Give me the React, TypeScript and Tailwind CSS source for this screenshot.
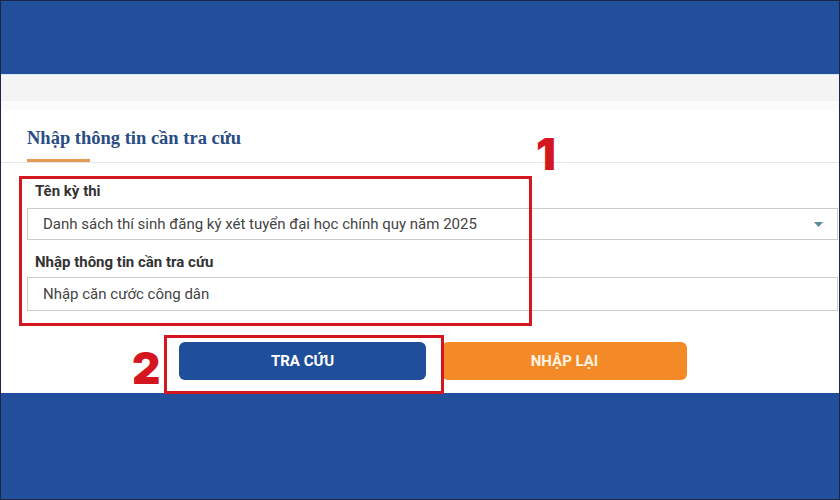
const RED = "border-[#d4161e]";

const App = () => {
  return (
    <div
      className="relative w-[840px] h-[500px] overflow-hidden flex flex-col bg-white border border-[#1c2746]"
      style={{ fontFamily: "Roboto, 'Liberation Sans', sans-serif" }}
    >
      {/* Top header band */}
      <div className="h-[73px] shrink-0 bg-[#224f9c]" />
      <div className="h-px shrink-0 bg-[#d6e6f2]" />
      <div className="h-[26px] shrink-0 bg-[#f4f4f4]" />
      <div className="h-[10px] shrink-0 bg-[#fbfbfb]" />

      {/* Section title */}
      <div className="shrink-0 pl-[26px] pt-[14px]">
        <h2
          className="text-[18.5px] leading-[26px] font-bold text-[#2a4c84]"
          style={{ fontFamily: "'Liberation Serif', serif" }}
        >
          Nhập thông tin cần tra cứu
        </h2>
        <div className="mt-[8px] h-[3px] w-[63px] bg-[#e39a52]" />
      </div>
      <div className="h-px shrink-0 bg-[#e6e6e6]" />

      {/* Form */}
      <div className="flex-1 flex flex-col pl-[26px] pr-px">
        <label className="mt-[18px] pl-[8px] text-[15px] leading-[20px] font-bold text-[#333]">Tên kỳ thi</label>
        <div className="mt-[7px] h-[32px] flex items-center justify-between border border-[#cccccc] pl-[15px] pr-[14px] text-[15px] text-[#444]">
          <span>Danh sách thí sinh đăng ký xét tuyển đại học chính quy năm 2025</span>
          <svg width="9" height="5" viewBox="0 0 9 5">
            <path d="M0 0h9L4.5 5z" fill="#5b8a99" />
          </svg>
        </div>
        <label className="mt-[12px] pl-[8px] text-[15px] leading-[20px] font-bold text-[#333]">Nhập thông tin cần tra cứu</label>
        <div className="mt-[5px] h-[34px] flex items-center border border-[#cccccc] pl-[15px] text-[15px] text-[#444]">
          Nhập căn cước công dân
        </div>

        <div className="mt-[31px] flex gap-[16px] pl-[152px]">
          <button className="w-[247px] h-[38px] rounded-[6px] bg-[#1f4e9b] text-white text-[15px] font-bold">TRA CỨU</button>
          <button className="w-[245px] h-[38px] rounded-[6px] bg-[#f38a27] text-[#fff3e0] text-[15px] font-bold">NHẬP LẠI</button>
        </div>
      </div>

      {/* Bottom band */}
      <div className="h-[106px] shrink-0 bg-[#224f9c]" />

      {/* Annotations */}
      <div className={`absolute left-[18px] top-[175px] w-[513px] h-[150px] border-[3px] ${RED}`} />
      <div className={`absolute left-[163px] top-[334px] w-[280px] h-[59px] border-[3px] ${RED}`} />
      <span
        className="absolute left-[535px] top-[127px] text-[44px] leading-[52px] font-black text-[#d4161e]"
        style={{ fontFamily: "Inter, sans-serif" }}
      >
        1
      </span>
      <span
        className="absolute left-[131px] top-[341px] text-[44px] leading-[52px] font-black text-[#d4161e]"
        style={{ fontFamily: "Inter, sans-serif" }}
      >
        2
      </span>
    </div>
  );
};

export default App;
